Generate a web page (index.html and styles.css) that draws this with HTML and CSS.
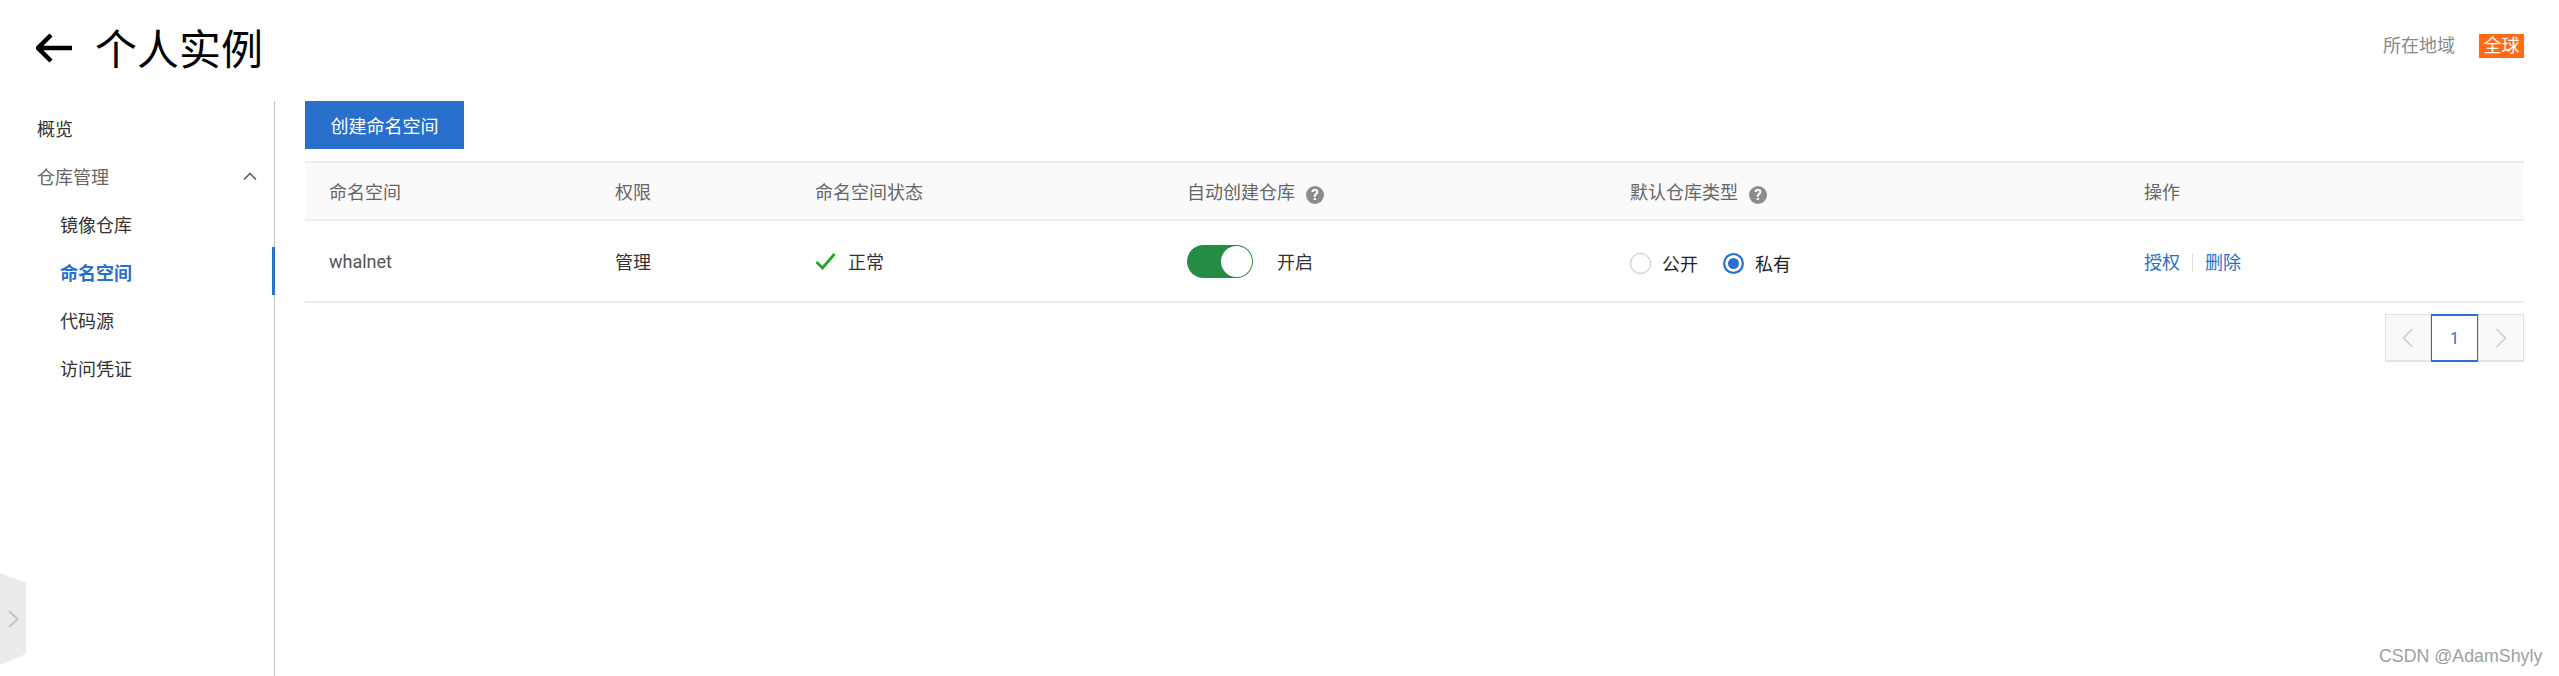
FILE: index.html
```html
<!DOCTYPE html>
<html lang="zh-CN">
<head>
<meta charset="utf-8">
<title>个人实例</title>
<link rel="stylesheet" href="styles.css">
</head>
<body>
<div class="page">
  <header class="topbar">
    <div class="title-group">
      <svg class="back" viewBox="0 0 36 30" width="36" height="30"><path d="M15 2 2 15l13 13M2 15h34" fill="none" stroke="#000" stroke-width="4.500"/></svg>
      <h1 class="title">个人实例</h1>
    </div>
    <div class="region">
      <span class="region-label">所在地域</span>
      <span class="region-badge">全球</span>
    </div>
  </header>
  <div class="body">
    <nav class="side">
      <a class="nav-item">概览</a>
      <a class="nav-item nav-group">仓库管理
        <svg class="caret" viewBox="0 0 14 8" width="14" height="8"><path d="M1 7.500 7 1.500l6 6" fill="none" stroke="#555" stroke-width="1.500"/></svg>
      </a>
      <a class="nav-item nav-sub">镜像仓库</a>
      <a class="nav-item nav-sub nav-active">命名空间</a>
      <a class="nav-item nav-sub">代码源</a>
      <a class="nav-item nav-sub">访问凭证</a>
    </nav>
    <main class="content">
      <button class="primary">创建命名空间</button>
      <table class="grid">
        <thead>
          <tr>
            <th class="c1">命名空间</th>
            <th class="c2">权限</th>
            <th class="c3">命名空间状态</th>
            <th class="c4">自动创建仓库<span class="help">?</span></th>
            <th class="c5">默认仓库类型<span class="help">?</span></th>
            <th class="c6">操作</th>
          </tr>
        </thead>
        <tbody>
          <tr>
            <td class="name">whalnet</td>
            <td>管理</td>
            <td>
              <span class="status">
                <svg class="check" viewBox="0 0 22 17" width="22" height="17"><path d="M1.500 9 7.500 15 19.500 1" fill="none" stroke="#1fa824" stroke-width="2.800"/></svg>正常
              </span>
            </td>
            <td>
              <span class="switch-wrap"><span class="switch"><span class="knob"></span></span>开启</span>
            </td>
            <td>
              <span class="radios">
                <span class="radio"></span><span class="radio-text radio-text-first">公开</span>
                <span class="radio radio-on"></span><span class="radio-text">私有</span>
              </span>
            </td>
            <td><a class="link">授权</a><span class="sep"></span><a class="link">删除</a></td>
          </tr>
        </tbody>
      </table>
      <div class="pager">
        <span class="pg pg-off"><svg viewBox="0 0 12 20" width="12" height="20"><path d="M10.500 1 1.500 10l9 9" fill="none" stroke="#ccc" stroke-width="1.500"/></svg></span>
        <span class="pg pg-on">1</span>
        <span class="pg pg-off"><svg viewBox="0 0 12 20" width="12" height="20"><path d="M1.500 1 10.500 10l-9 9" fill="none" stroke="#ccc" stroke-width="1.500"/></svg></span>
      </div>
    </main>
  </div>
  <div class="drawer"><svg viewBox="0 0 11 18" width="11" height="18"><path d="M1 1 9.500 9 1 17" fill="none" stroke="#c4c4c4" stroke-width="2"/></svg></div>
  <div class="watermark">CSDN @AdamShyly</div>
</div>
</body>
</html>
```
FILE: styles.css
```css
* { box-sizing: border-box; }
html, body { margin: 0; padding: 0; height: 100%; background: #fff; overflow: hidden; }
body { font-family: Roboto, "Noto Sans CJK SC", sans-serif; font-size: 18px; color: #333; }
.page { position: relative; height: 676px; display: flex; flex-direction: column; }
.topbar { height: 101px; flex: none; display: flex; justify-content: space-between; align-items: flex-start; padding: 33px 35px 0 36px; }
.title-group { display: flex; align-items: center; gap: 23px; height: 30px; }
.back { display: block; }
.title { margin: 0; padding-bottom: 3px; font-size: 42px; font-weight: 400; line-height: 30px; color: #000; font-family: "Noto Sans CJK SC", sans-serif; }
.region { display: flex; align-items: center; gap: 24px; height: 26px; }
.region-label { color: #888; line-height: 24px; }
.region-badge { background: #ff6a14; color: #fff; width: 45px; height: 24px; line-height: 24px; text-align: center; font-size: 18px; }
.body { flex: 1; display: flex; min-height: 0; }
.side { width: 275px; flex: none; border-right: 1px solid #c4c4c4; padding-top: 2px; }
.nav-item { position: relative; display: flex; align-items: center; height: 48px; padding: 6px 0 0 37px; color: #333; line-height: 42px; }
.nav-group { color: #666; }
.caret { position: absolute; left: 243px; top: 21px; }
.nav-sub { padding-left: 60px; }
.nav-active { color: #2970cc; font-weight: 700; }
.nav-active::after { content: ""; position: absolute; right: -1px; top: 0; bottom: 0; width: 3px; background: #2970cc; }
.content { flex: 1; padding: 0 35px 0 30px; min-width: 0; }
.primary { display: block; width: 159px; height: 48px; background: #2970cc; color: #fff; border: 0; padding: 0; font: inherit; }
.grid { width: 100%; margin-top: 12px; border-collapse: collapse; table-layout: fixed; }
.grid th { height: 58px; padding: 0 0 0 24px; background: #fafafa; border-top: 2px solid #eee; border-bottom: 2px solid #eee; font-weight: 400; text-align: left; color: #666; }
.grid td { height: 82px; padding: 0 0 0 24px; border-bottom: 2px solid #eee; }
.c1 { width: 286px; }
.c2 { width: 200px; }
.c3 { width: 372px; }
.c4 { width: 443px; }
.c5 { width: 514px; }
.help { display: inline-block; width: 18px; height: 18px; margin-left: 11px; border-radius: 50%; background: #8c8c8c; color: #fff; font-size: 15px; font-weight: 700; line-height: 18px; text-align: center; vertical-align: -1px; }
.name { color: #555; }
.status { display: flex; align-items: center; gap: 11px; }
.check { display: block; }
.switch-wrap { display: flex; align-items: center; gap: 24px; }
.switch { display: block; position: relative; width: 66px; height: 33px; border-radius: 17px; background: #238e43; }
.knob { position: absolute; right: 1px; top: 1px; width: 31px; height: 31px; border-radius: 50%; background: #fff; }
.radios { display: flex; align-items: center; padding-top: 4px; }
.radio { width: 21px; height: 21px; border-radius: 50%; border: 1px solid #bbb; background: #fff; flex: none; }
.radio-on { border: 2px solid #2970cc; box-shadow: inset 0 0 0 3px #fff; background: #2970cc; }
.radio-text { margin-left: 11px; color: #222; }
.radio-text-first { margin-right: 25px; }
.link { color: #2970cc; }
.sep { display: inline-block; width: 1px; height: 18px; margin: 0 12px; background: #ddd; vertical-align: -3px; }
.pager { display: flex; justify-content: flex-end; margin-top: 11px; }
.pg { display: flex; align-items: center; justify-content: center; width: 46px; height: 48px; border: 2px solid #e3e3e3; border-width: 1px 1px 2px 1px; background: #f9f9f9; }
.pg-on { width: 47px; border: 2px solid #2970cc; border-width: 2px 1px; background: #fff; color: #2970cc; font-size: 16px; }
.drawer { position: absolute; left: 0; top: 573px; width: 26px; height: 92px; background: #ebebeb; clip-path: polygon(0 0, 100% 11%, 100% 88%, 0 100%); display: flex; align-items: center; padding-left: 8px; }
.drawer svg { display: block; }
.watermark { position: absolute; left: 2379px; top: 644px; font-family: "Liberation Sans", sans-serif; font-size: 17.800px; line-height: 24px; color: #a0a0a0; }
```
